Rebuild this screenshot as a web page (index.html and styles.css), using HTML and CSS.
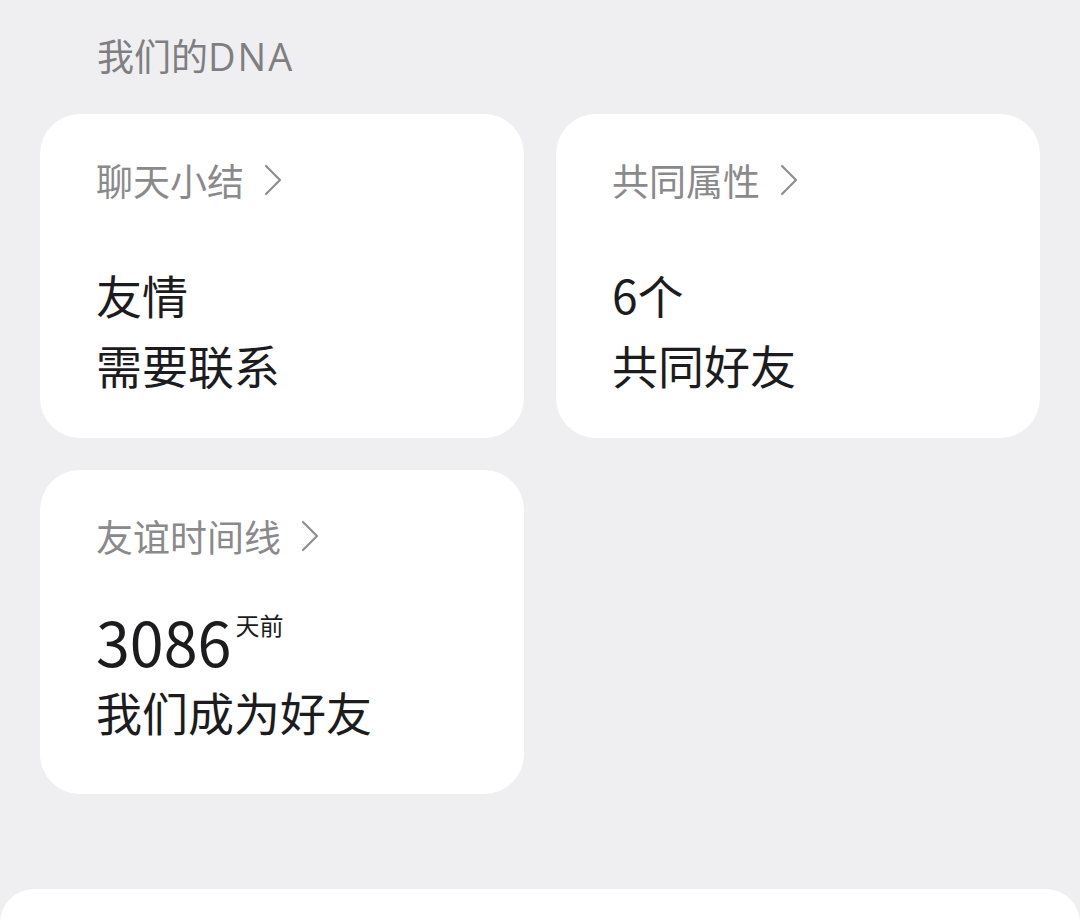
FILE: index.html
```html
<!DOCTYPE html>
<html lang="zh">
<head>
<meta charset="utf-8">
<link rel="stylesheet" href="styles.css">
</head>
<body>
<div class="page">
  <h2 class="section-title">我们的<span class="latin">DNA</span></h2>
  <div class="grid">
    <div class="card">
      <div class="label">聊天小结<svg class="chev" viewBox="0 0 18 32"><path d="M2 2 L16 16 L2 30" fill="none" stroke="currentColor" stroke-width="2.2" stroke-linecap="round" stroke-linejoin="round"/></svg></div>
      <div class="main">
        <div class="line">友情</div>
        <div class="line">需要联系</div>
      </div>
    </div>
    <div class="card">
      <div class="label">共同属性<svg class="chev" viewBox="0 0 18 32"><path d="M2 2 L16 16 L2 30" fill="none" stroke="currentColor" stroke-width="2.2" stroke-linecap="round" stroke-linejoin="round"/></svg></div>
      <div class="main">
        <div class="line">6个</div>
        <div class="line">共同好友</div>
      </div>
    </div>
    <div class="card">
      <div class="label">友谊时间线<svg class="chev" viewBox="0 0 18 32"><path d="M2 2 L16 16 L2 30" fill="none" stroke="currentColor" stroke-width="2.2" stroke-linecap="round" stroke-linejoin="round"/></svg></div>
      <div class="main main-timeline">
        <div class="line num-line"><span class="num">3086</span><span class="sup">天前</span></div>
        <div class="line">我们成为好友</div>
      </div>
    </div>
  </div>
</div>
<div class="bottom-card"></div>
</body>
</html>
```
FILE: styles.css
```css
html, body {
  margin: 0;
  padding: 0;
  background: #efeff1;
  font-family: "Noto Sans CJK SC", "Noto Sans", sans-serif;
  overflow: hidden;
  height: 923px;
}
.page {
  padding: 0 40px;
}
.section-title {
  margin: 0;
  padding: 31px 0 0 57px;
  height: 48px;
  font-size: 37px;
  line-height: 48px;
  font-weight: 400;
  color: #7f7f82;
}
.section-title .latin {
  font-family: "Open Sans", "Noto Sans", sans-serif;
  font-size: 38px;
  letter-spacing: 2px;
  line-height: 40px;
}
.grid {
  margin-top: 35px;
  display: grid;
  grid-template-columns: 484px 484px;
  gap: 32px;
}
.card {
  background: #fff;
  border-radius: 40px;
  height: 324px;
  box-sizing: border-box;
  padding: 44px 56px 0 56px;
}
.label {
  display: flex;
  align-items: center;
  font-size: 37px;
  line-height: 44px;
  color: #8a8a8c;
}
.chev {
  width: 18px;
  height: 32px;
  margin-left: 20px;
  color: #8e8e90;
}
.main {
  margin-top: 57px;
  color: #1c1c1e;
}
.main-timeline {
  margin-top: 48px;
}
.line {
  font-size: 46px;
  line-height: 70px;
}
.num-line {
  display: flex;
  align-items: flex-start;
  height: 70px;
}
.num {
  font-size: 61px;
  line-height: 70px;
}
.sup {
  font-size: 24px;
  line-height: 30px;
  margin-left: 4px;
  margin-top: 4px;
}
.bottom-card {
  margin-top: 95px;
  height: 34px;
  background: #fff;
  border-radius: 40px 40px 0 0;
}
```
